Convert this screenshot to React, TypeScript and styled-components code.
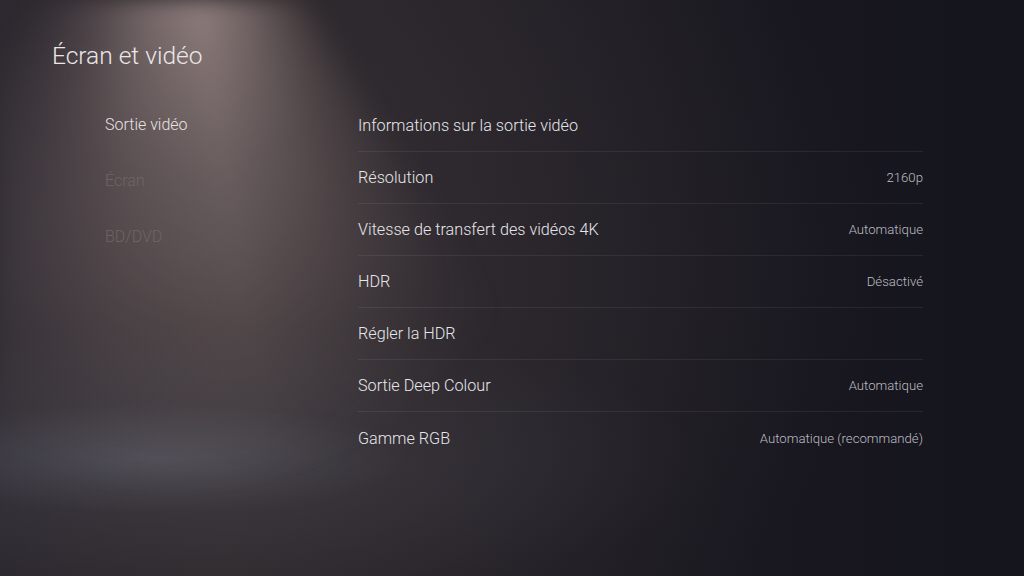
import React, { FC } from 'react'
import styled, { createGlobalStyle } from 'styled-components'

const GlobalStyle = createGlobalStyle`
    html, body {
        margin: 0;
        padding: 0;
        background: #16151e;
    }
    * {
        box-sizing: border-box;
    }
`

// the spotlight and the floor haze are plain decoration behind the menu
const Screen = styled.div`
    position: relative;
    width: 1024px;
    height: 576px;
    overflow: hidden;
    font-family: Roboto, 'Open Sans', sans-serif;
    background:
        radial-gradient(ellipse 260px 55px at 150px 458px, rgba(115, 120, 135, 0.3), transparent 100%),
        radial-gradient(ellipse 520px 140px at 190px 465px, rgba(90, 90, 102, 0.28), transparent 100%),
        radial-gradient(ellipse 700px 520px at 180px 260px, rgba(70, 62, 66, 0.5), transparent 100%),
        linear-gradient(90deg, #25222a 0%, #2b2629 22%, #221f26 50%, #18171f 78%, #15151d 100%);

    &::before {
        content: '';
        position: absolute;
        inset: 0;
        background: conic-gradient(
            from 0deg at 170px -220px,
            transparent 0deg,
            transparent 147deg,
            rgba(180, 155, 150, 0.3) 153deg,
            rgba(195, 170, 165, 0.55) 162deg,
            rgba(215, 190, 185, 0.66) 172deg,
            rgba(200, 175, 170, 0.52) 186deg,
            rgba(160, 140, 140, 0.28) 200deg,
            transparent 212deg,
            transparent 360deg
        );
        -webkit-mask-image: radial-gradient(ellipse 520px 720px at 170px -220px, #000 22%, rgba(0,0,0,0.5) 55%, transparent 100%);
        mask-image: radial-gradient(ellipse 520px 720px at 170px -220px, #000 22%, rgba(0,0,0,0.5) 55%, transparent 100%);
        filter: blur(10px);
        pointer-events: none;
    }
`

const Content = styled.div`
    position: relative;
    z-index: 1;
`

const Header = styled.header`
    padding: 40px 0 0 52px;
    height: 97px;
`

const Title = styled.h1`
    margin: 0;
    font-size: 24.5px;
    line-height: 32px;
    font-weight: 300;
    color: #ebe7e7;
`

const Body = styled.div`
    display: flex;
    padding-left: 105px;
`

const Nav = styled.nav`
    width: 253px;
    margin-top: -1px;
    display: flex;
    flex-direction: column;
`

const NavItem = styled.div<{ $active?: boolean }>`
    height: 56px;
    display: flex;
    align-items: center;
    font-size: 16px;
    font-weight: 300;
    color: ${p => (p.$active ? '#e6e2e2' : '#6d6565')};
`

const List = styled.div`
    width: 565px;
    padding-top: 3px;
    display: flex;
    flex-direction: column;
`

const Row = styled.div`
    height: 52px;
    display: flex;
    align-items: center;
    justify-content: space-between;
    border-bottom: 1px solid rgba(255, 255, 255, 0.07);

    &:last-child {
        border-bottom: none;
    }
`

const Label = styled.span`
    font-size: 16.2px;
    font-weight: 300;
    color: #e6e6ea;
`

const Value = styled.span`
    font-size: 13.2px;
    font-weight: 300;
    color: #bcbcc2;
`

interface Setting {
    label: string
    value?: string
}

const settings: Setting[] = [
    { label: 'Informations sur la sortie vidéo' },
    { label: 'Résolution', value: '2160p' },
    { label: 'Vitesse de transfert des vidéos 4K', value: 'Automatique' },
    { label: 'HDR', value: 'Désactivé' },
    { label: 'Régler la HDR' },
    { label: 'Sortie Deep Colour', value: 'Automatique' },
    { label: 'Gamme RGB', value: 'Automatique (recommandé)' },
]

const sections = ['Sortie vidéo', 'Écran', 'BD/DVD']

const App: FC = () => {
    return (
        <>
            <GlobalStyle />
            <Screen>
                <Content>
                    <Header>
                        <Title>Écran et vidéo</Title>
                    </Header>
                    <Body>
                        <Nav>
                            {sections.map((s, i) => (
                                <NavItem key={s} $active={i === 0}>{s}</NavItem>
                            ))}
                        </Nav>
                        <List>
                            {settings.map(s => (
                                <Row key={s.label}>
                                    <Label>{s.label}</Label>
                                    {s.value && <Value>{s.value}</Value>}
                                </Row>
                            ))}
                        </List>
                    </Body>
                </Content>
            </Screen>
        </>
    )
}

export default App
